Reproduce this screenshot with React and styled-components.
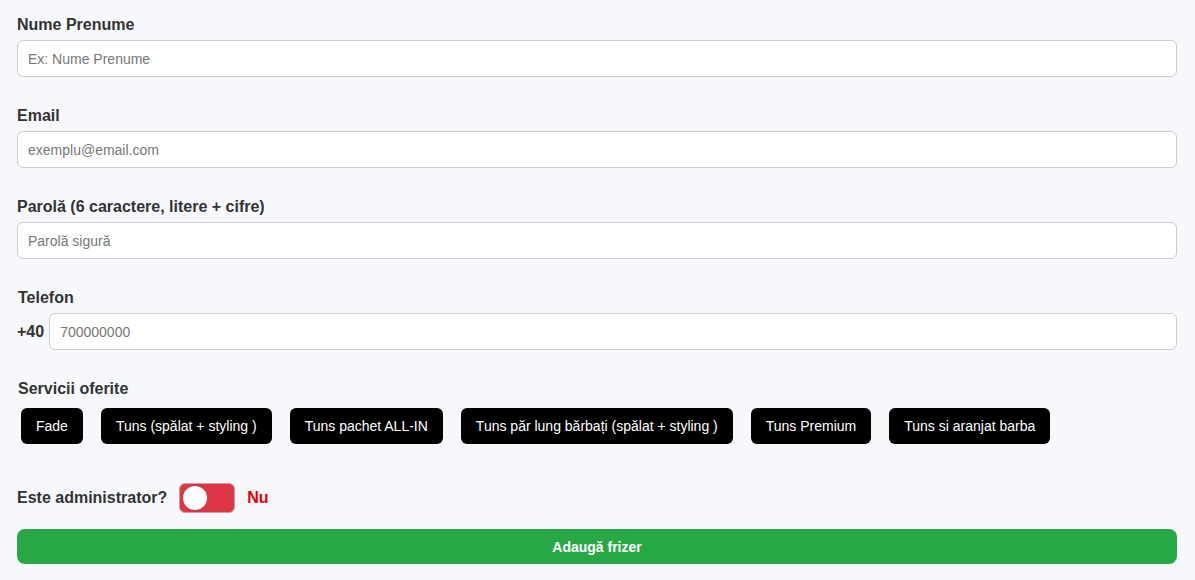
import React, { useState } from "react";
import styled, { createGlobalStyle } from "styled-components";

const Global = createGlobalStyle`
  html, body { margin: 0; padding: 0; background: #f7f8fc; }
  body { font-family: "Liberation Sans", Arial, sans-serif; }
  * { box-sizing: border-box; }
`;

const Form = styled.form`
  padding: 16px 18px 16px 17px;
  display: flex;
  flex-direction: column;
`;

const Field = styled.div`
  display: flex;
  flex-direction: column;
  margin-bottom: 30px;
`;

const Label = styled.label`
  font-size: 16px;
  font-weight: bold;
  color: #333;
  line-height: 18px;
  margin-bottom: 6px;
  padding-left: ${(p) => (p.$indent ? "1px" : "0")};
`;

const Input = styled.input`
  width: 100%;
  height: 37px;
  border: 1px solid #ccc;
  border-radius: 6px;
  background: #fff;
  padding: 0 10px;
  font-family: "Liberation Sans", Arial, sans-serif;
  font-size: 14px;
  color: #333;
  outline: none;
  &::placeholder { color: #777; }
`;

const PhoneRow = styled.div`
  display: flex;
  align-items: center;
  gap: 5px;
`;

const Prefix = styled.span`
  font-size: 16px;
  font-weight: bold;
  color: #333;
`;

const Chips = styled.div`
  display: flex;
  flex-wrap: wrap;
  gap: 10px;
  margin-top: 4px;
`;

const Chip = styled.button`
  margin: 0 4px;
  height: 36px;
  padding: 0 15px;
  background: ${(p) => (p.$active ? "#28a745" : "#000")};
  color: #fff;
  border: none;
  border-radius: 6px;
  font-family: "Liberation Sans", Arial, sans-serif;
  font-size: 14px;
  cursor: pointer;
`;

const AdminRow = styled.div`
  display: flex;
  align-items: center;
  gap: 12px;
  margin-top: 39px;
  margin-bottom: 16px;
`;

const AdminLabel = styled.span`
  font-size: 16px;
  font-weight: bold;
  color: #333;
`;

const Toggle = styled.button`
  width: 56px;
  height: 30px;
  border: 1px solid #c9a0a8;
  border-radius: 6px;
  background: ${(p) => (p.$on ? "#28a745" : "#dc3545")};
  position: relative;
  padding: 0;
  cursor: pointer;
`;

const Knob = styled.span`
  position: absolute;
  top: 2px;
  left: ${(p) => (p.$on ? "29px" : "3px")};
  width: 24px;
  height: 24px;
  border-radius: 50%;
  background: #fff;
`;

const State = styled.span`
  font-size: 16px;
  font-weight: bold;
  color: ${(p) => (p.$on ? "#28a745" : "#e00000")};
`;

const Submit = styled.button`
  width: 100%;
  height: 35px;
  background: #28a745;
  color: #fff;
  border: none;
  border-radius: 8px;
  font-family: "Liberation Sans", Arial, sans-serif;
  font-size: 14px;
  font-weight: bold;
  cursor: pointer;
`;

const services = [
  "Fade",
  "Tuns (spălat + styling )",
  "Tuns pachet ALL-IN",
  "Tuns păr lung bărbați (spălat + styling )",
  "Tuns Premium",
  "Tuns si aranjat barba",
];

export default function App() {
  const [admin, setAdmin] = useState(false);
  return (
    <>
      <Global />
      <Form onSubmit={(e) => e.preventDefault()}>
        <Field>
          <Label>Nume Prenume</Label>
          <Input placeholder="Ex: Nume Prenume" />
        </Field>
        <Field>
          <Label>Email</Label>
          <Input placeholder="exemplu@email.com" />
        </Field>
        <Field>
          <Label>Parolă (6 caractere, litere + cifre)</Label>
          <Input type="password" placeholder="Parolă sigură" />
        </Field>
        <Field>
          <Label $indent>Telefon</Label>
          <PhoneRow>
            <Prefix>+40</Prefix>
            <Input placeholder="700000000" />
          </PhoneRow>
        </Field>
        <Label $indent>Servicii oferite</Label>
        <Chips>
          {services.map((s) => (
            <Chip type="button" key={s}>{s}</Chip>
          ))}
        </Chips>
        <AdminRow>
          <AdminLabel>Este administrator?</AdminLabel>
          <Toggle type="button" $on={admin} onClick={() => setAdmin(!admin)}>
            <Knob $on={admin} />
          </Toggle>
          <State $on={admin}>{admin ? "Da" : "Nu"}</State>
        </AdminRow>
        <Submit type="submit">Adaugă frizer</Submit>
      </Form>
    </>
  );
}
